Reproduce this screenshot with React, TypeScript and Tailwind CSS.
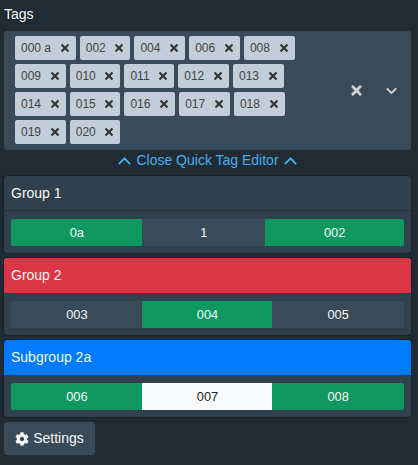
import { FaTimes, FaChevronDown, FaCog } from "react-icons/fa";

const tags = ["000 a", "002", "004", "006", "008", "009", "010", "011", "012", "013", "014", "015", "016", "017", "018", "019", "020"];

type Opt = { label: string; tone: "green" | "plain" | "white" };

function Up() {
  return (
    <svg viewBox="0 0 13 8" className="h-[8px] w-[13px]" fill="none" stroke="currentColor" strokeWidth="1.8">
      <path d="M0.8 7.2 L6.5 1.4 L12.2 7.2" />
    </svg>
  );
}

function Segments({ items }: { items: Opt[] }) {
  return (
    <div className="flex px-[7px] pt-2 pb-[7px]">
      {items.map((o, i) => (
        <div
          key={o.label}
          className={
            "flex h-[27px] flex-auto items-center justify-center text-[12.8px] " +
            (i === 0 ? "rounded-l-[2px] " : "-ml-px ") +
            (i === items.length - 1 ? "rounded-r-[2px] " : "") +
            (o.tone === "green"
              ? "bg-[#0f9960] text-[#f5f8fa]"
              : o.tone === "white"
                ? "bg-[#f8f9fa] text-[#212529]"
                : "bg-[#394b59] text-[#f5f8fa]")
          }
        >
          {o.label}
        </div>
      ))}
    </div>
  );
}

function Group({ title, head, items }: { title: string; head: string; items: Opt[] }) {
  return (
    <div className="mb-[5px] overflow-hidden rounded-[3px] bg-[#30404d] shadow-[0_0_0_1px_rgba(16,22,26,0.4)]">
      <div className={"flex h-[35px] items-center px-[7px] text-[14px] text-[#f5f8fa] " + head}>{title}</div>
      <Segments items={items} />
    </div>
  );
}

export default function App() {
  return (
    <div className="h-[465px] w-[418px] overflow-hidden bg-[#202b33] pl-[4px] pr-[7px] font-['Liberation_Sans',sans-serif]">
      <div className="flex h-[31px] items-center pb-[3px] text-[14px] text-[#f5f8fa]">Tags</div>
      <div className="flex h-[119px] rounded-[3px] bg-[#394b59]">
        <div className="flex w-[330px] flex-wrap content-start gap-[4px] pl-[11px] pt-[5px]">
          {tags.map((t) => (
            <div key={t} className="flex h-[24px] items-center gap-[9.7px] rounded-[2px] bg-[#c1cdd8] pl-[6px] pr-[7px] text-[12px] text-[#444]">
              <span>{t}</span>
              <FaTimes className="h-[12px] w-[8px] text-[#333]" />
            </div>
          ))}
        </div>
        <div className="flex flex-1 items-center gap-[23px] pl-[17px]">
          <FaTimes className="h-[15px] w-[11px] text-[#d0d0d0]" />
          <FaChevronDown className="h-[12px] w-[13px] text-[#d0d0d0]" />
        </div>
      </div>
      <div className="mb-[5px] flex h-[21px] items-center justify-center gap-[5px] text-[14px] text-[#48aff0]">
        <Up />
        <span>Close Quick Tag Editor</span>
        <Up />
      </div>
      <Group
        title="Group 1"
        head="border-b border-[#26323c]"
        items={[
          { label: "0a", tone: "green" },
          { label: "1", tone: "plain" },
          { label: "002", tone: "green" },
        ]}
      />
      <Group
        title="Group 2"
        head="bg-[#dc3545]"
        items={[
          { label: "003", tone: "plain" },
          { label: "004", tone: "green" },
          { label: "005", tone: "plain" },
        ]}
      />
      <Group
        title="Subgroup 2a"
        head="bg-[#007bff]"
        items={[
          { label: "006", tone: "green" },
          { label: "007", tone: "white" },
          { label: "008", tone: "green" },
        ]}
      />
      <button className="mt-px flex h-[33px] w-[91px] items-center justify-center gap-[4px] rounded-[3px] bg-[#394b59] text-[14px] text-[#f5f8fa]">
        <FaCog className="h-[14px] w-[14px]" />
        <span>Settings</span>
      </button>
    </div>
  );
}
